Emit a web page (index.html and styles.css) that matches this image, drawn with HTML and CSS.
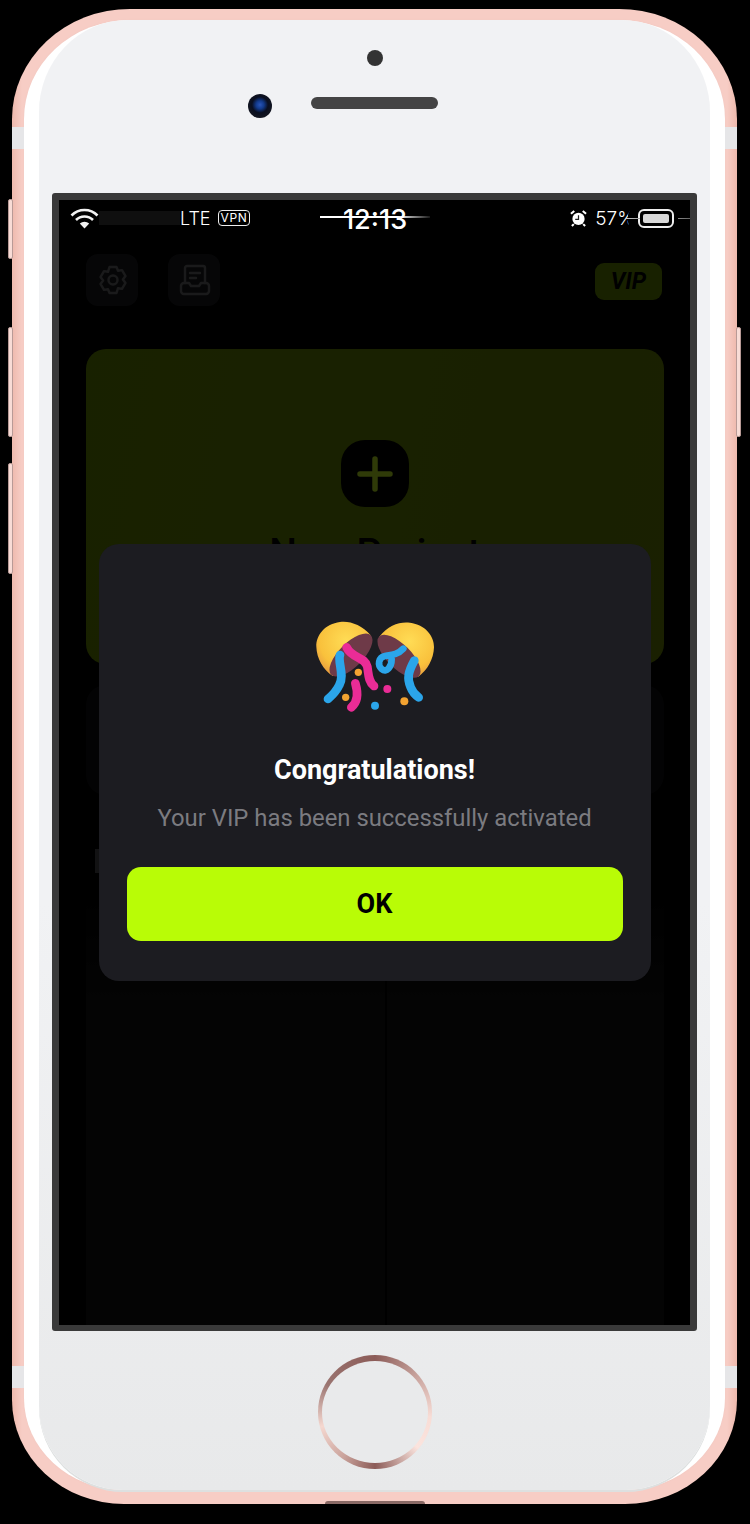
FILE: index.html
```html
<!DOCTYPE html>
<html lang="en">
<head>
    <meta charset="UTF-8">
    <title>VIP activated</title>
    <link rel="stylesheet" href="styles.css">
</head>
<body>
<div class="device">
    <div class="side-btn btn-mute"></div>
    <div class="side-btn btn-up"></div>
    <div class="side-btn btn-down"></div>
    <div class="side-btn btn-power"></div>
    <div class="band band-tl"></div>
    <div class="band band-tr"></div>
    <div class="band band-bl"></div>
    <div class="band band-br"></div>
    <div class="connector"></div>

    <div class="bezel">
        <div class="face">
            <div class="sensors">
                <div class="sensor-dot"></div>
                <div class="sensor-row">
                    <div class="camera"></div>
                    <div class="speaker"></div>
                </div>
            </div>

            <div class="screen">
                <div class="statusbar">
                    <div class="status-left">
                        <svg class="wifi" viewBox="0 0 29 22" width="29" height="22">
                            <path d="M1.500 8.500a18 18 0 0 1 26 0M6 13a12 12 0 0 1 17 0" fill="none" stroke="#f2f2f2" stroke-width="2.600"/>
                            <path d="M9.800 16.600a7 7 0 0 1 9.400 0L14.500 21.500z" fill="#f2f2f2"/>
                        </svg>
                        <div class="signal-smear"></div>
                        <span class="lte">LTE</span>
                        <span class="vpn">VPN</span>
                    </div>
                    <div class="clock">12:13</div>
                    <div class="status-right">
                        <svg class="alarm" viewBox="0 0 18 18" width="17" height="18">
                            <circle cx="9" cy="10" r="6.500" fill="#fff"/>
                            <path d="M1 4.500 4.500 1.500M17 4.500l-3.500-3M4 15.500l-2 2M14 15.500l2 2" stroke="#fff" stroke-width="2.200"/>
                            <path d="M9 6v4.500H5.500" fill="none" stroke="#222" stroke-width="1.300"/>
                        </svg>
                        <span class="percent">57%</span>
                        <div class="battery"><div class="battery-fill"></div></div>
                    </div>
                </div>

                <div class="app">
                    <div class="toolbar">
                        <div class="tool-tile">
                            <svg viewBox="0 0 32 32" width="32" height="32" fill="none" stroke="#c8c8cc" stroke-width="2.400" stroke-linejoin="round">
                                <path d="M12.500 3h7l1.500 3.800 4-.7 3.500 6-2.600 3.400 2.600 3.400-3.500 6-4-.7L19.500 29h-7L11 25.200l-4 .7-3.500-6 2.600-3.400-2.600-3.400 3.500-6 4 .7z"/>
                                <circle cx="16" cy="16" r="4.500"/>
                            </svg>
                        </div>
                        <div class="tool-tile">
                            <svg viewBox="0 0 32 32" width="32" height="32" fill="none" stroke="#c8c8cc" stroke-width="2.400" stroke-linecap="round" stroke-linejoin="round">
                                <path d="M6 19V4a2 2 0 0 1 2-2h16a2 2 0 0 1 2 2v15"/>
                                <path d="M11 9h10M11 14h6"/>
                                <path d="M2 22a3 3 0 0 1 3-3h5l2 3h8l2-3h5a3 3 0 0 1 3 3v5a3 3 0 0 1-3 3H5a3 3 0 0 1-3-3z"/>
                            </svg>
                        </div>
                        <div class="vip-tag">VIP</div>
                    </div>

                    <div class="new-card">
                        <div class="plus-tile">
                            <svg class="plus-icon" viewBox="0 0 36 36" width="36" height="36">
                                <path d="M18 3v30M3 18h30" stroke="#2f3a08" stroke-width="5.500" stroke-linecap="round"/>
                            </svg>
                        </div>
                        <div class="new-label">New Project</div>
                    </div>

                    <div class="wide-card"></div>
                    <div class="section-title"></div>
                    <div class="columns">
                        <div class="column"></div>
                        <div class="column"></div>
                    </div>
                </div>

                <div class="overlay">
                    <div class="dialog">
                        <svg class="party" viewBox="0 0 510 390" width="170" height="130">
                            <defs>
                                <radialGradient id="dome" cx="55%" cy="35%" r="75%">
                                    <stop offset="0" stop-color="#ffdc55"/>
                                    <stop offset="0.650" stop-color="#f9c13c"/>
                                    <stop offset="1" stop-color="#e2913f"/>
                                </radialGradient>
                            </defs>
                            <path d="M242 106C215 75 180 62 150 66 105 72 78 105 79 140 80 175 100 210 128 228z" fill="url(#dome)"/>
                            <ellipse cx="183" cy="165" rx="84" ry="36" transform="rotate(-45 183 165)" fill="#6e3a48"/>
                            <path d="M268 110C295 75 330 64 360 68 405 74 433 107 432 142 431 177 412 212 385 230z" fill="url(#dome)"/>
                            <ellipse cx="327" cy="169" rx="84" ry="36" transform="rotate(45 327 169)" fill="#6e3a48"/>
                            <g fill="none" stroke-width="26" stroke-linecap="round" stroke-linejoin="round">
                                <path d="M150 165C142 185 165 225 148 255 140 272 128 285 114 297" stroke="#2ba5ea"/>
                                <path d="M170 142C185 175 225 170 232 200 236 225 235 245 252 258" stroke="#ea2c96"/>
                                <path d="M196 250C205 280 205 305 184 322" stroke="#ea2c96"/>
                                <path d="M340 146C322 165 305 165 285 168 265 172 262 195 275 207 290 220 305 200 305 178" stroke="#2ba5ea" stroke-width="20"/>
                                <path d="M373 182C355 215 350 235 362 262 368 278 375 285 386 292" stroke="#2ba5ea"/>
                            </g>
                            <circle cx="205" cy="217" r="11" fill="#f3a331"/>
                            <circle cx="167" cy="292" r="11" fill="#f3a331"/>
                            <circle cx="292" cy="267" r="12" fill="#ea2c96"/>
                            <circle cx="255" cy="317" r="12" fill="#2ba5ea"/>
                            <circle cx="343" cy="304" r="12" fill="#f3a331"/>
                        </svg>
                        <div class="dialog-title">Congratulations!</div>
                        <div class="dialog-text">Your VIP has been successfully activated</div>
                        <div class="ok-btn">OK</div>
                    </div>
                </div>
            </div>

            <div class="home-btn"></div>
        </div>
    </div>
</div>
</body>
</html>
```

FILE: styles.css
```css
* { box-sizing: border-box; }
html, body { margin: 0; padding: 0; background: #000; }
body { width: 750px; height: 1524px; overflow: hidden; padding: 9px 0 0 12px; font-family: Roboto, "Liberation Sans", sans-serif; }

/* device shell */
.device { position: relative; width: 725px; height: 1495px; padding: 11px 12px 14px; border-radius: 118px 118px 112px 112px / 110px 110px 104px 104px; background: linear-gradient(90deg, #eeb9ad 0, #f7cdc5 10px, #f7cdc5 715px, #eeb9ad 725px); }
.bezel { height: 100%; padding: 0 15px; border-radius: 106px 106px 100px 100px / 99px 99px 92px 92px; background: #fff; box-shadow: 0 0 2px #f0c8c0; }
.face { height: 100%; border-radius: 88px 88px 84px 84px / 92px 92px 84px 84px; background: linear-gradient(#f1f2f4 0, #f1f2f4 60%, #e8e9ea 100%); box-shadow: 0 2px 0 #dde0e0; }

.side-btn { position: absolute; left: -4px; width: 5px; border: 1px solid #b89a96; border-radius: 2px; background: #f8dcd6; }
.btn-mute { top: 190px; height: 60px; }
.btn-up { top: 318px; height: 110px; }
.btn-down { top: 454px; height: 111px; }
.btn-power { top: 318px; left: 724px; height: 110px; }

.band { position: absolute; width: 12px; height: 22px; background: #e6e6e8; }
.band-tl { left: 0; top: 118px; }
.band-tr { right: 0; top: 118px; }
.band-bl { left: 0; top: 1357px; }
.band-br { right: 0; top: 1357px; }
.connector { position: absolute; left: 313px; bottom: 0; width: 100px; height: 3px; border-radius: 3px 3px 0 0; background: #8a6a66; }

/* sensors */
.sensors { height: 173px; padding-top: 30px; }
.sensor-dot { width: 16px; height: 16px; margin: 0 auto; border-radius: 50%; background: #333; }
.sensor-row { display: grid; grid-template-columns: 1fr auto 1fr; align-items: center; margin-top: 28px; padding-right: 1px; }
.camera { justify-self: end; width: 24px; height: 24px; margin-right: 39px; border-radius: 50%; background: radial-gradient(circle at 50% 45%, #2a55b8 0, #123a8c 22%, #0a0f20 45%, #1c1c20 100%); }
.speaker { grid-column: 2; align-self: start; width: 127px; height: 12px; margin-top: 3px; border-radius: 6px; background: #444; }

/* screen */
.screen { position: relative; display: flex; flex-direction: column; width: 645px; height: 1138px; margin-left: 13px; border: solid #3a3a3a; border-width: 7px 7px 6px; border-radius: 3px; background: #000; overflow: hidden; }

.statusbar { position: relative; z-index: 2; display: grid; grid-template-columns: 1fr auto 1fr; flex: none; align-items: center; height: 36px; padding: 0 6px 0 11px; color: #fff; font-family: Inter, "Liberation Sans", sans-serif; }
.status-left { display: flex; align-items: center; }
.wifi { flex: none; }
.signal-smear { width: 81px; height: 14px; background: #0f0f0f; }
.lte { font-size: 18px; font-weight: 300; }
.vpn { margin-left: 7px; padding: 0 2px; border: 1.500px solid #eee; border-radius: 4px; font-size: 12px; line-height: 14px; letter-spacing: .6px; }
.clock { position: relative; width: 110px; margin: 0 2px 0 -2px; padding-top: 2px; text-align: center; font-size: 27px; font-weight: 500; }
.clock::before { content: ""; position: absolute; left: 0; right: 0; top: 50%; height: 2px; margin-top: -2px; background: linear-gradient(90deg, #fff 0, #fff 70%, rgba(255,255,255,.1) 100%); }
.status-right { display: flex; align-items: center; justify-content: flex-end; }
.alarm { flex: none; }
.percent { margin-left: 8px; margin-right: -8px; font-size: 19px; font-weight: 300; white-space: nowrap; }
/* the battery sits on top of the end of the percent sign, as in the shot */
.battery { position: relative; display: flex; width: 36px; height: 19px; margin-right: 10px; margin-left: 11px; padding: 3px; border: 2.500px solid #eee; border-radius: 6px; background: #000; box-shadow: -10px 0 0 0 #000; }
.battery::before { content: ""; position: absolute; top: 50%; left: -14px; right: -24px; height: 1px; background: linear-gradient(90deg, #ccc, #999 20%, transparent 20%, transparent 74%, #888 74%, #555 100%); }
.battery-fill { flex: 1; border-radius: 2px; background: #d8d8d8; }

/* app behind the dialog */
.app { display: flex; flex-direction: column; flex: 1; padding: 18px 26px 0 27px; }
.toolbar { display: flex; flex: none; align-items: center; gap: 30px; }
.tool-tile { display: flex; align-items: center; justify-content: center; width: 52px; height: 52px; padding-left: 2px; border-radius: 12px; background: #32343a; }
.vip-tag { width: 67px; height: 37px; margin: 2px 2px 0 auto; border-radius: 9px; background: #b9fc06; color: #000; font-size: 23px; font-weight: 700; font-style: italic; line-height: 37px; text-align: center; }
.new-card { display: flex; flex: none; flex-direction: column; align-items: center; height: 315px; margin-top: 43px; padding-top: 91px; border-radius: 20px; background: linear-gradient(100deg, #bcff06, #c4f40e); }
.plus-tile { display: flex; align-items: center; justify-content: center; width: 68px; height: 67px; border-radius: 24px; background: #000; }
.plus-icon { position: relative; z-index: 2; }
.new-label { margin-top: 24px; color: #000; font-size: 39px; font-weight: 500; line-height: 44px; }
.wide-card { flex: none; height: 110px; margin-top: 21px; border-radius: 20px; background: #1c1c21; }
.section-title { flex: none; width: 40px; height: 24px; margin: 54px 0 0 9px; background: #8c8c90; }
.columns { display: grid; grid-template-columns: 299px 277px; gap: 2px; flex: 1; margin-top: 7px; }
.column { background: linear-gradient(transparent, #242424 30%); }

/* dialog */
.overlay { position: absolute; inset: 0; z-index: 1; display: flex; align-items: center; justify-content: center; background: rgba(0,0,0,.87); }
.dialog { display: flex; flex-direction: column; align-items: center; width: 552px; height: 437px; padding: 56px 28px 40px; border-radius: 20px; background: #1c1c21; }
.party { flex: none; }
.dialog-title { margin-top: 24px; color: #fff; font-size: 27px; font-weight: 700; line-height: 32px; }
.dialog-text { margin-top: 17px; color: #7b7b80; font-size: 23.850px; line-height: 30px; }
.ok-btn { width: 100%; height: 74px; margin-top: 34px; border-radius: 14px; background: #b9fc06; color: #000; font-size: 27px; font-weight: 700; line-height: 74px; text-align: center; }

/* home button */
.home-btn { width: 114px; height: 114px; margin: 24px auto 0; border: solid transparent; border-width: 6px 4px; border-radius: 50%; background: linear-gradient(#e9eaeb, #e9eaeb) padding-box, conic-gradient(#8c5c58 0deg, #c9a49e 50deg, #f8ddd6 95deg, #fbe4de 130deg, #8c5c58 180deg, #caa39c 215deg, #f5d8d0 255deg, #9a7470 300deg, #8c5c58 360deg) border-box; }
```
